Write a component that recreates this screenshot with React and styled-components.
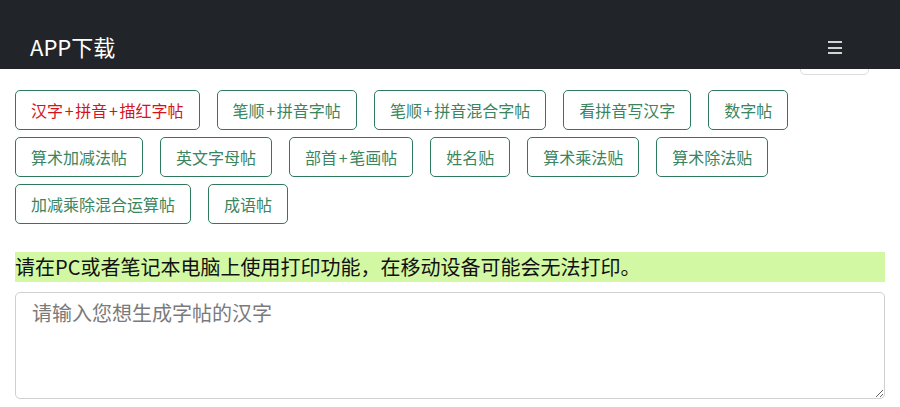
import React from 'react';
import styled, { createGlobalStyle } from 'styled-components';

const GlobalStyle = createGlobalStyle`
  html, body {
    margin: 0;
    padding: 0;
    background: #fff;
    font-family: "Noto Sans CJK SC", "Noto Sans", "Liberation Sans", sans-serif;
  }
`;

const Page = styled.div`
  position: relative;
  width: 900px;
  height: 407px;
  overflow: hidden;
`;

const NavBar = styled.div`
  position: relative;
  z-index: 2;
  height: 69px;
  background: #212529;
  display: flex;
  align-items: flex-end;
  justify-content: space-between;
  padding: 0 58px 7px 30px;
  box-sizing: border-box;
`;

const Brand = styled.div`
  color: #fff;
  font-size: 22px;
  line-height: 30px;
  padding-bottom: 1px;
`;

const Burger = styled.div`
  display: flex;
  flex-direction: column;
  gap: 3.4px;
  width: 14px;
  margin-bottom: 8px;
  span {
    display: block;
    height: 2px;
    background: #d2d3d5;
  }
`;

const HiddenBox = styled.div`
  position: absolute;
  z-index: 1;
  left: 800px;
  top: 34px;
  width: 69px;
  height: 41px;
  border: 1px solid #dcdcdc;
  border-radius: 5px;
  background: #fff;
  box-sizing: border-box;
`;

const Content = styled.div`
  padding: 21px 15px 0;
`;

const ButtonWrap = styled.div`
  display: flex;
  flex-wrap: wrap;
  column-gap: 17px;
  row-gap: 7px;
`;

const TieButton = styled.div`
  height: 40px;
  box-sizing: border-box;
  padding: 0 15px;
  border: 1px solid #2f7a5c;
  border-radius: 5px;
  display: flex;
  align-items: center;
  font-size: 16px;
  color: ${p => (p.active ? '#d4141c' : '#3a8560')};
  background: #fff;
`;

const Plus = styled.span`
  margin: 0 1.7px;
`;

const Notice = styled.div`
  margin-top: 28px;
  background: #d3f8a3;
  font-size: 20px;
  line-height: 30px;
  color: #111;
`;

const Input = styled.textarea`
  display: block;
  margin-top: 10px;
  width: 100%;
  height: 107px;
  box-sizing: border-box;
  border: 1px solid #d0d0d0;
  border-radius: 5px;
  padding: 5px 16px;
  font-family: "Noto Sans CJK SC", "Noto Sans", sans-serif;
  font-size: 20px;
  line-height: 30px;
  color: #333;
  &::placeholder {
    color: #7a7a7a;
  }
`;

const buttons = [
  '汉字+拼音+描红字帖',
  '笔顺+拼音字帖',
  '笔顺+拼音混合字帖',
  '看拼音写汉字',
  '数字帖',
  '算术加减法帖',
  '英文字母帖',
  '部首+笔画帖',
  '姓名贴',
  '算术乘法贴',
  '算术除法贴',
  '加减乘除混合运算帖',
  '成语帖',
];

function label(text) {
  const parts = text.split('+');
  return parts.map((p, i) => (
    <React.Fragment key={i}>
      {i > 0 && <Plus>+</Plus>}
      {p}
    </React.Fragment>
  ));
}

export default function App() {
  return (
    <Page>
      <GlobalStyle />
      <NavBar>
        <Brand>APP下载</Brand>
        <Burger>
          <span />
          <span />
          <span />
        </Burger>
      </NavBar>
      <HiddenBox />
      <Content>
        <ButtonWrap>
          {buttons.map((b, i) => (
            <TieButton key={b} active={i === 0}>
              {label(b)}
            </TieButton>
          ))}
        </ButtonWrap>
        <Notice>请在PC或者笔记本电脑上使用打印功能，在移动设备可能会无法打印。</Notice>
        <Input placeholder="请输入您想生成字帖的汉字" />
      </Content>
    </Page>
  );
}
